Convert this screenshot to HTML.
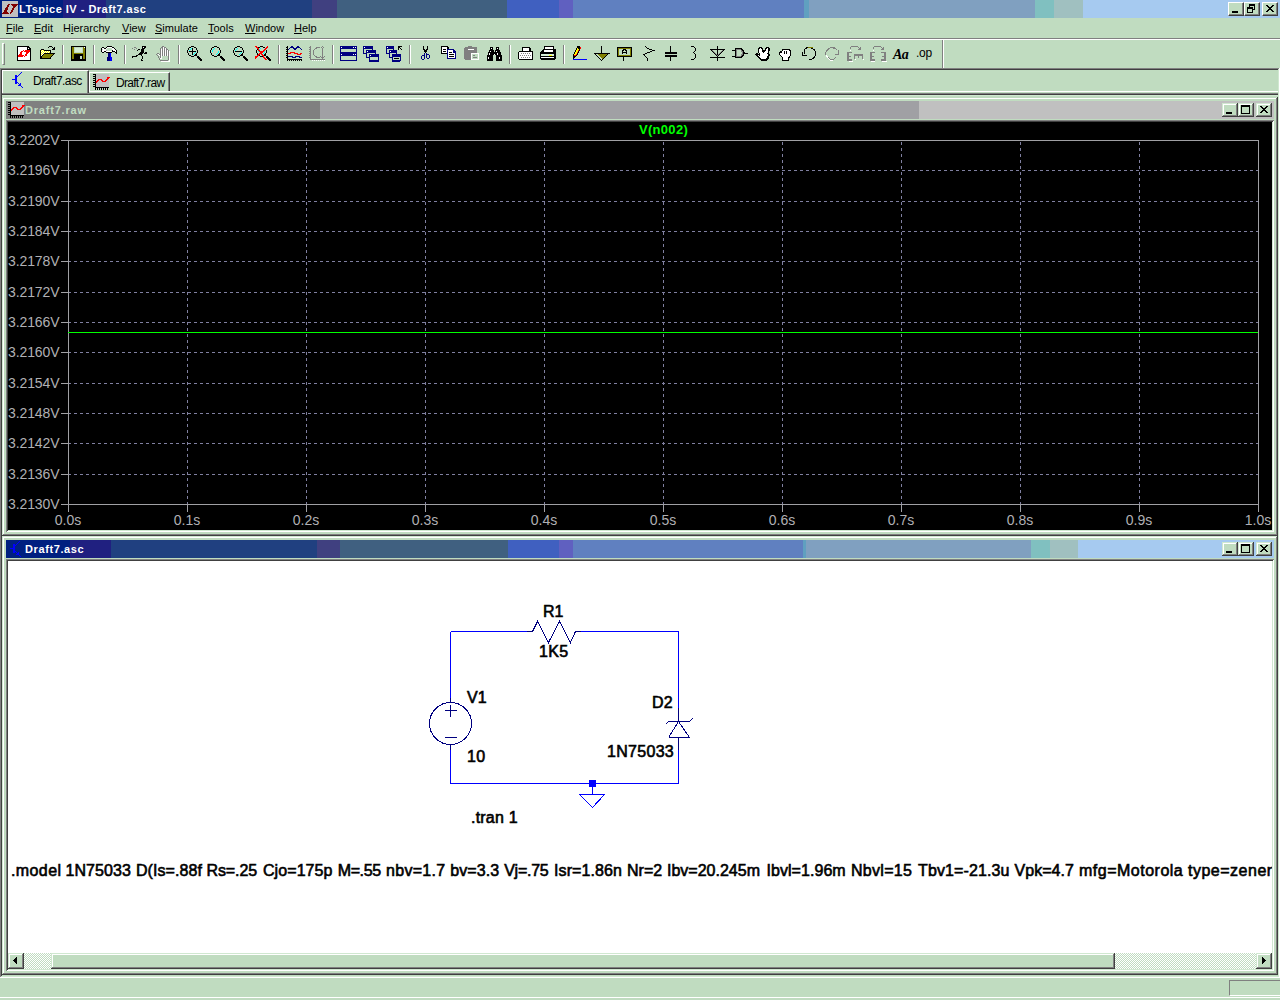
<!DOCTYPE html>
<html><head><meta charset="utf-8">
<style>
*{margin:0;padding:0;box-sizing:border-box}
html,body{width:1280px;height:1000px;overflow:hidden;background:#C0DCC0;font-family:"Liberation Sans",sans-serif}
.a{position:absolute}
.t{position:absolute;white-space:nowrap;line-height:1}
.tb span{position:absolute;top:0;height:18px}
.ttl{color:#fff;font-weight:bold;font-size:11px;letter-spacing:0.4px}
.btn{position:absolute;background:#C0DCC0;border-top:1px solid #fff;border-left:1px solid #fff;border-right:1px solid #404040;border-bottom:1px solid #404040;box-shadow:inset -1px -1px 0 #808080}
.menu span{position:absolute;top:22px;font-size:11px;color:#000}
.menu u{text-decoration:underline;text-decoration-thickness:1px;text-underline-offset:1px}
.sep{position:absolute;top:45px;width:2px;height:19px;border-left:1px solid #808080;border-right:1px solid #fff}
.ic{position:absolute;top:45px;width:16px;height:16px}
.ylab{position:absolute;left:8px;width:53px;font-size:14px;color:#B0B0B4;line-height:14px;letter-spacing:-0.1px}
.xlab{position:absolute;top:513px;font-size:14px;color:#B0B0B4;line-height:14px;width:60px;text-align:center}
.sch{position:absolute;font-size:16px;color:#000;line-height:16px;white-space:nowrap;-webkit-text-stroke:0.6px #000}
.fr{box-shadow:inset -1px -1px 0 #404040,inset 1px 1px 0 #D0E8D0,inset -2px -2px 0 #808080,inset 2px 2px 0 #fff}
.sk{box-shadow:inset 1px 1px 0 #808080,inset -1px -1px 0 #fff,inset 2px 2px 0 #404040,inset -2px -2px 0 #D0E8D0}
.rb{background:#C0DCC0;box-shadow:inset -1px -1px 0 #404040,inset 1px 1px 0 #D0E8D0,inset -2px -2px 0 #808080,inset 2px 2px 0 #fff}
.ctb span{position:absolute;top:0;height:18px}
</style></head><body>

<!-- main title bar -->
<div class="a tb" style="left:0;top:0;width:1280px;height:18px;background:#A6CAF0">
<span style="left:0;width:63px;background:#002080"></span>
<span style="left:63px;width:43px;background:#202080"></span>
<span style="left:106px;width:206px;background:#204080"></span>
<span style="left:312px;width:25px;background:#404080"></span>
<span style="left:337px;width:170px;background:#406080"></span>
<span style="left:507px;width:52px;background:#4060C0"></span>
<span style="left:559px;width:14px;background:#6060C0"></span>
<span style="left:573px;width:231px;background:#6080C0"></span>
<span style="left:804px;width:5px;background:#60A0C0"></span>
<span style="left:809px;width:226px;background:#80A0C0"></span>
<span style="left:1035px;width:19px;background:#80C0C0"></span>
<span style="left:1054px;width:29px;background:#A0C0C0"></span>
</div>
<div id="appicon" class="a" style="left:2px;top:1px;width:16px;height:16px;background:#C0C0C0"></div>
<div class="t ttl" style="left:19px;top:4px;letter-spacing:0.48px">LTspice IV - Draft7.asc</div>
<div class="btn" style="left:1228px;top:2px;width:16px;height:14px"></div>
<div class="btn" style="left:1244px;top:2px;width:16px;height:14px"></div>
<div class="btn" style="left:1262px;top:2px;width:16px;height:14px"></div>

<!-- menu -->
<div class="menu">
<span style="left:6px"><u>F</u>ile</span>
<span style="left:34px"><u>E</u>dit</span>
<span style="left:63px">H<u>i</u>erarchy</span>
<span style="left:122px"><u>V</u>iew</span>
<span style="left:155px"><u>S</u>imulate</span>
<span style="left:208px"><u>T</u>ools</span>
<span style="left:245px"><u>W</u>indow</span>
<span style="left:294px"><u>H</u>elp</span>
</div>
<div class="a" style="left:0;top:38px;width:1280px;height:1px;background:#808080"></div>
<div class="a" style="left:0;top:39px;width:1280px;height:1px;background:#fff"></div>

<!-- toolbar -->
<div class="a" style="left:2px;top:43px;width:3px;height:22px;border-left:1px solid #fff;border-top:1px solid #fff;border-right:1px solid #808080;border-bottom:1px solid #808080"></div>
<svg class="a" style="left:0;top:0" width="1280" height="70" shape-rendering="crispEdges">
<path d="M17 46H28L31 49V61H17Z" fill="#000"/>
<path d="M18 47H27V50H30V60H18Z" fill="#fff"/>
<rect x="28" y="48" width="1" height="1" fill="#fff"/>
<rect x="27" y="47" width="1" height="3" fill="#000"/>
<rect x="27" y="49" width="3" height="1" fill="#000"/>
<rect x="28" y="47" width="1" height="1" fill="#000"/>
<rect x="23" y="50" width="1" height="1" fill="#FF0000"/>
<rect x="25" y="50" width="5" height="1" fill="#FF0000"/>
<rect x="21" y="51" width="2" height="1" fill="#FF0000"/>
<rect x="24" y="51" width="6" height="1" fill="#FF0000"/>
<rect x="20" y="52" width="2" height="1" fill="#FF0000"/>
<rect x="26" y="52" width="3" height="1" fill="#FF0000"/>
<rect x="20" y="53" width="2" height="1" fill="#FF0000"/>
<rect x="26" y="53" width="2" height="1" fill="#FF0000"/>
<rect x="19" y="54" width="3" height="1" fill="#FF0000"/>
<rect x="25" y="54" width="2" height="1" fill="#FF0000"/>
<rect x="18" y="55" width="6" height="1" fill="#FF0000"/>
<rect x="25" y="55" width="2" height="1" fill="#FF0000"/>
<rect x="18" y="56" width="5" height="1" fill="#FF0000"/>
<rect x="24" y="56" width="1" height="1" fill="#FF0000"/>
<rect x="49" y="46" width="1" height="1" fill="#000"/>
<rect x="50" y="46" width="1" height="1" fill="#000"/>
<rect x="51" y="46" width="1" height="1" fill="#000"/>
<rect x="48" y="47" width="1" height="1" fill="#000"/>
<rect x="52" y="47" width="1" height="1" fill="#000"/>
<rect x="54" y="47" width="1" height="1" fill="#000"/>
<rect x="53" y="48" width="1" height="1" fill="#000"/>
<rect x="54" y="48" width="1" height="1" fill="#000"/>
<rect x="41" y="49" width="1" height="1" fill="#000"/>
<rect x="42" y="49" width="1" height="1" fill="#000"/>
<rect x="43" y="49" width="1" height="1" fill="#000"/>
<rect x="52" y="49" width="1" height="1" fill="#000"/>
<rect x="53" y="49" width="1" height="1" fill="#000"/>
<rect x="54" y="49" width="1" height="1" fill="#000"/>
<rect x="40" y="50" width="1" height="1" fill="#000"/>
<rect x="41" y="50" width="1" height="1" fill="#FFFF00"/>
<rect x="42" y="50" width="1" height="1" fill="#fff"/>
<rect x="43" y="50" width="1" height="1" fill="#FFFF00"/>
<rect x="44" y="50" width="1" height="1" fill="#000"/>
<rect x="45" y="50" width="1" height="1" fill="#000"/>
<rect x="46" y="50" width="1" height="1" fill="#000"/>
<rect x="47" y="50" width="1" height="1" fill="#000"/>
<rect x="48" y="50" width="1" height="1" fill="#000"/>
<rect x="49" y="50" width="1" height="1" fill="#000"/>
<rect x="50" y="50" width="1" height="1" fill="#000"/>
<rect x="40" y="51" width="1" height="1" fill="#000"/>
<rect x="41" y="51" width="1" height="1" fill="#fff"/>
<rect x="42" y="51" width="1" height="1" fill="#FFFF00"/>
<rect x="43" y="51" width="1" height="1" fill="#fff"/>
<rect x="44" y="51" width="1" height="1" fill="#FFFF00"/>
<rect x="45" y="51" width="1" height="1" fill="#fff"/>
<rect x="46" y="51" width="1" height="1" fill="#FFFF00"/>
<rect x="47" y="51" width="1" height="1" fill="#fff"/>
<rect x="48" y="51" width="1" height="1" fill="#FFFF00"/>
<rect x="49" y="51" width="1" height="1" fill="#fff"/>
<rect x="50" y="51" width="1" height="1" fill="#000"/>
<rect x="40" y="52" width="1" height="1" fill="#000"/>
<rect x="41" y="52" width="1" height="1" fill="#FFFF00"/>
<rect x="42" y="52" width="1" height="1" fill="#fff"/>
<rect x="43" y="52" width="1" height="1" fill="#FFFF00"/>
<rect x="44" y="52" width="1" height="1" fill="#fff"/>
<rect x="45" y="52" width="1" height="1" fill="#FFFF00"/>
<rect x="46" y="52" width="1" height="1" fill="#fff"/>
<rect x="47" y="52" width="1" height="1" fill="#FFFF00"/>
<rect x="48" y="52" width="1" height="1" fill="#fff"/>
<rect x="49" y="52" width="1" height="1" fill="#FFFF00"/>
<rect x="50" y="52" width="1" height="1" fill="#000"/>
<rect x="40" y="53" width="1" height="1" fill="#000"/>
<rect x="41" y="53" width="1" height="1" fill="#fff"/>
<rect x="42" y="53" width="1" height="1" fill="#FFFF00"/>
<rect x="43" y="53" width="1" height="1" fill="#fff"/>
<rect x="44" y="53" width="1" height="1" fill="#000"/>
<rect x="45" y="53" width="1" height="1" fill="#000"/>
<rect x="46" y="53" width="1" height="1" fill="#000"/>
<rect x="47" y="53" width="1" height="1" fill="#000"/>
<rect x="48" y="53" width="1" height="1" fill="#000"/>
<rect x="49" y="53" width="1" height="1" fill="#000"/>
<rect x="50" y="53" width="1" height="1" fill="#000"/>
<rect x="51" y="53" width="1" height="1" fill="#000"/>
<rect x="52" y="53" width="1" height="1" fill="#000"/>
<rect x="53" y="53" width="1" height="1" fill="#000"/>
<rect x="54" y="53" width="1" height="1" fill="#000"/>
<rect x="40" y="54" width="1" height="1" fill="#000"/>
<rect x="41" y="54" width="1" height="1" fill="#FFFF00"/>
<rect x="42" y="54" width="1" height="1" fill="#fff"/>
<rect x="43" y="54" width="1" height="1" fill="#000"/>
<rect x="44" y="54" width="1" height="1" fill="#808000"/>
<rect x="45" y="54" width="1" height="1" fill="#808000"/>
<rect x="46" y="54" width="1" height="1" fill="#808000"/>
<rect x="47" y="54" width="1" height="1" fill="#808000"/>
<rect x="48" y="54" width="1" height="1" fill="#808000"/>
<rect x="49" y="54" width="1" height="1" fill="#808000"/>
<rect x="50" y="54" width="1" height="1" fill="#808000"/>
<rect x="51" y="54" width="1" height="1" fill="#808000"/>
<rect x="52" y="54" width="1" height="1" fill="#808000"/>
<rect x="53" y="54" width="1" height="1" fill="#000"/>
<rect x="40" y="55" width="1" height="1" fill="#000"/>
<rect x="41" y="55" width="1" height="1" fill="#fff"/>
<rect x="42" y="55" width="1" height="1" fill="#000"/>
<rect x="43" y="55" width="1" height="1" fill="#808000"/>
<rect x="44" y="55" width="1" height="1" fill="#808000"/>
<rect x="45" y="55" width="1" height="1" fill="#808000"/>
<rect x="46" y="55" width="1" height="1" fill="#808000"/>
<rect x="47" y="55" width="1" height="1" fill="#808000"/>
<rect x="48" y="55" width="1" height="1" fill="#808000"/>
<rect x="49" y="55" width="1" height="1" fill="#808000"/>
<rect x="50" y="55" width="1" height="1" fill="#808000"/>
<rect x="51" y="55" width="1" height="1" fill="#808000"/>
<rect x="52" y="55" width="1" height="1" fill="#000"/>
<rect x="40" y="56" width="1" height="1" fill="#000"/>
<rect x="41" y="56" width="1" height="1" fill="#000"/>
<rect x="42" y="56" width="1" height="1" fill="#808000"/>
<rect x="43" y="56" width="1" height="1" fill="#808000"/>
<rect x="44" y="56" width="1" height="1" fill="#808000"/>
<rect x="45" y="56" width="1" height="1" fill="#808000"/>
<rect x="46" y="56" width="1" height="1" fill="#808000"/>
<rect x="47" y="56" width="1" height="1" fill="#808000"/>
<rect x="48" y="56" width="1" height="1" fill="#808000"/>
<rect x="49" y="56" width="1" height="1" fill="#808000"/>
<rect x="50" y="56" width="1" height="1" fill="#808000"/>
<rect x="51" y="56" width="1" height="1" fill="#000"/>
<rect x="40" y="57" width="1" height="1" fill="#000"/>
<rect x="41" y="57" width="1" height="1" fill="#000"/>
<rect x="42" y="57" width="1" height="1" fill="#808000"/>
<rect x="43" y="57" width="1" height="1" fill="#808000"/>
<rect x="44" y="57" width="1" height="1" fill="#808000"/>
<rect x="45" y="57" width="1" height="1" fill="#808000"/>
<rect x="46" y="57" width="1" height="1" fill="#808000"/>
<rect x="47" y="57" width="1" height="1" fill="#808000"/>
<rect x="48" y="57" width="1" height="1" fill="#808000"/>
<rect x="49" y="57" width="1" height="1" fill="#808000"/>
<rect x="50" y="57" width="1" height="1" fill="#000"/>
<rect x="40" y="58" width="1" height="1" fill="#000"/>
<rect x="41" y="58" width="1" height="1" fill="#000"/>
<rect x="42" y="58" width="1" height="1" fill="#000"/>
<rect x="43" y="58" width="1" height="1" fill="#000"/>
<rect x="44" y="58" width="1" height="1" fill="#000"/>
<rect x="45" y="58" width="1" height="1" fill="#000"/>
<rect x="46" y="58" width="1" height="1" fill="#000"/>
<rect x="47" y="58" width="1" height="1" fill="#000"/>
<rect x="48" y="58" width="1" height="1" fill="#000"/>
<rect x="49" y="58" width="1" height="1" fill="#000"/>
<rect x="50" y="58" width="1" height="1" fill="#000"/>
<rect x="71" y="46" width="15" height="15" fill="#000"/>
<rect x="72" y="47" width="2" height="12" fill="#808000"/>
<rect x="83" y="47" width="2" height="12" fill="#808000"/>
<rect x="74" y="47" width="9" height="6" fill="#C0DCC0"/>
<rect x="75" y="48" width="7" height="4" fill="#D8F0D8"/>
<rect x="74" y="53" width="9" height="1" fill="#808000"/>
<rect x="80" y="56" width="2" height="3" fill="#C0DCC0"/>
<rect x="84" y="47" width="1" height="1" fill="#fff"/>
<rect x="107" y="46" width="1" height="1" fill="#000"/>
<rect x="108" y="46" width="1" height="1" fill="#000"/>
<rect x="109" y="46" width="1" height="1" fill="#000"/>
<rect x="110" y="46" width="1" height="1" fill="#000"/>
<rect x="111" y="46" width="1" height="1" fill="#000"/>
<rect x="102" y="47" width="1" height="1" fill="#000"/>
<rect x="103" y="47" width="1" height="1" fill="#000"/>
<rect x="106" y="47" width="1" height="1" fill="#000"/>
<rect x="107" y="47" width="1" height="1" fill="#fff"/>
<rect x="108" y="47" width="1" height="1" fill="#fff"/>
<rect x="109" y="47" width="1" height="1" fill="#fff"/>
<rect x="110" y="47" width="1" height="1" fill="#fff"/>
<rect x="111" y="47" width="1" height="1" fill="#fff"/>
<rect x="112" y="47" width="1" height="1" fill="#000"/>
<rect x="113" y="47" width="1" height="1" fill="#000"/>
<rect x="101" y="48" width="1" height="1" fill="#000"/>
<rect x="102" y="48" width="1" height="1" fill="#fff"/>
<rect x="103" y="48" width="1" height="1" fill="#fff"/>
<rect x="104" y="48" width="1" height="1" fill="#000"/>
<rect x="105" y="48" width="1" height="1" fill="#000"/>
<rect x="106" y="48" width="1" height="1" fill="#fff"/>
<rect x="107" y="48" width="1" height="1" fill="#C0DCC0"/>
<rect x="108" y="48" width="1" height="1" fill="#C0DCC0"/>
<rect x="109" y="48" width="1" height="1" fill="#C0DCC0"/>
<rect x="110" y="48" width="1" height="1" fill="#C0DCC0"/>
<rect x="111" y="48" width="1" height="1" fill="#C0DCC0"/>
<rect x="112" y="48" width="1" height="1" fill="#fff"/>
<rect x="113" y="48" width="1" height="1" fill="#fff"/>
<rect x="114" y="48" width="1" height="1" fill="#000"/>
<rect x="101" y="49" width="1" height="1" fill="#000"/>
<rect x="102" y="49" width="1" height="1" fill="#C0DCC0"/>
<rect x="103" y="49" width="1" height="1" fill="#fff"/>
<rect x="104" y="49" width="1" height="1" fill="#fff"/>
<rect x="105" y="49" width="1" height="1" fill="#fff"/>
<rect x="106" y="49" width="1" height="1" fill="#C0DCC0"/>
<rect x="107" y="49" width="1" height="1" fill="#C0DCC0"/>
<rect x="108" y="49" width="1" height="1" fill="#C0DCC0"/>
<rect x="109" y="49" width="1" height="1" fill="#C0DCC0"/>
<rect x="110" y="49" width="1" height="1" fill="#C0DCC0"/>
<rect x="111" y="49" width="1" height="1" fill="#C0DCC0"/>
<rect x="112" y="49" width="1" height="1" fill="#fff"/>
<rect x="113" y="49" width="1" height="1" fill="#fff"/>
<rect x="114" y="49" width="1" height="1" fill="#fff"/>
<rect x="115" y="49" width="1" height="1" fill="#000"/>
<rect x="101" y="50" width="1" height="1" fill="#000"/>
<rect x="102" y="50" width="1" height="1" fill="#fff"/>
<rect x="103" y="50" width="1" height="1" fill="#fff"/>
<rect x="104" y="50" width="1" height="1" fill="#fff"/>
<rect x="105" y="50" width="1" height="1" fill="#fff"/>
<rect x="106" y="50" width="1" height="1" fill="#A0A0A0"/>
<rect x="107" y="50" width="1" height="1" fill="#C0DCC0"/>
<rect x="108" y="50" width="1" height="1" fill="#C0DCC0"/>
<rect x="109" y="50" width="1" height="1" fill="#C0DCC0"/>
<rect x="110" y="50" width="1" height="1" fill="#C0DCC0"/>
<rect x="111" y="50" width="1" height="1" fill="#C0DCC0"/>
<rect x="112" y="50" width="1" height="1" fill="#000"/>
<rect x="113" y="50" width="1" height="1" fill="#fff"/>
<rect x="114" y="50" width="1" height="1" fill="#fff"/>
<rect x="115" y="50" width="1" height="1" fill="#fff"/>
<rect x="116" y="50" width="1" height="1" fill="#000"/>
<rect x="101" y="51" width="1" height="1" fill="#000"/>
<rect x="102" y="51" width="1" height="1" fill="#fff"/>
<rect x="103" y="51" width="1" height="1" fill="#fff"/>
<rect x="104" y="51" width="1" height="1" fill="#000"/>
<rect x="105" y="51" width="1" height="1" fill="#000"/>
<rect x="106" y="51" width="1" height="1" fill="#fff"/>
<rect x="107" y="51" width="1" height="1" fill="#fff"/>
<rect x="108" y="51" width="1" height="1" fill="#fff"/>
<rect x="109" y="51" width="1" height="1" fill="#fff"/>
<rect x="110" y="51" width="1" height="1" fill="#fff"/>
<rect x="111" y="51" width="1" height="1" fill="#fff"/>
<rect x="112" y="51" width="1" height="1" fill="#000"/>
<rect x="113" y="51" width="1" height="1" fill="#000"/>
<rect x="114" y="51" width="1" height="1" fill="#000"/>
<rect x="115" y="51" width="1" height="1" fill="#fff"/>
<rect x="116" y="51" width="1" height="1" fill="#000"/>
<rect x="102" y="52" width="1" height="1" fill="#000"/>
<rect x="103" y="52" width="1" height="1" fill="#000"/>
<rect x="106" y="52" width="1" height="1" fill="#000"/>
<rect x="107" y="52" width="1" height="1" fill="#000"/>
<rect x="108" y="52" width="1" height="1" fill="#000"/>
<rect x="109" y="52" width="1" height="1" fill="#000"/>
<rect x="110" y="52" width="1" height="1" fill="#000"/>
<rect x="111" y="52" width="1" height="1" fill="#000"/>
<rect x="115" y="52" width="1" height="1" fill="#000"/>
<rect x="116" y="52" width="1" height="1" fill="#000"/>
<rect x="116" y="53" width="1" height="1" fill="#000"/>
<rect x="108" y="53" width="2" height="4" fill="#000080"/>
<rect x="110" y="53" width="1" height="4" fill="#0000FF"/>
<rect x="107" y="57" width="3" height="4" fill="#000080"/>
<rect x="110" y="57" width="2" height="4" fill="#0000FF"/>
<rect x="142" y="46" width="1" height="1" fill="#000"/>
<rect x="143" y="46" width="1" height="1" fill="#000"/>
<rect x="144" y="46" width="1" height="1" fill="#000"/>
<rect x="145" y="46" width="1" height="1" fill="#000"/>
<rect x="134" y="47" width="1" height="1" fill="#808080"/>
<rect x="135" y="47" width="1" height="1" fill="#808080"/>
<rect x="142" y="47" width="1" height="1" fill="#000"/>
<rect x="143" y="47" width="1" height="1" fill="#fff"/>
<rect x="144" y="47" width="1" height="1" fill="#000"/>
<rect x="145" y="47" width="1" height="1" fill="#000"/>
<rect x="132" y="48" width="1" height="1" fill="#808080"/>
<rect x="136" y="48" width="1" height="1" fill="#808080"/>
<rect x="142" y="48" width="1" height="1" fill="#000"/>
<rect x="143" y="48" width="1" height="1" fill="#000"/>
<rect x="144" y="48" width="1" height="1" fill="#000"/>
<rect x="134" y="49" width="1" height="1" fill="#808080"/>
<rect x="138" y="49" width="1" height="1" fill="#000"/>
<rect x="139" y="49" width="1" height="1" fill="#000"/>
<rect x="141" y="49" width="1" height="1" fill="#000"/>
<rect x="142" y="49" width="1" height="1" fill="#000"/>
<rect x="143" y="49" width="1" height="1" fill="#000"/>
<rect x="137" y="50" width="1" height="1" fill="#000"/>
<rect x="141" y="50" width="1" height="1" fill="#000"/>
<rect x="142" y="50" width="1" height="1" fill="#000"/>
<rect x="143" y="50" width="1" height="1" fill="#000"/>
<rect x="141" y="51" width="1" height="1" fill="#000"/>
<rect x="142" y="51" width="1" height="1" fill="#000"/>
<rect x="143" y="51" width="1" height="1" fill="#000"/>
<rect x="140" y="52" width="1" height="1" fill="#000"/>
<rect x="141" y="52" width="1" height="1" fill="#000"/>
<rect x="142" y="52" width="1" height="1" fill="#000"/>
<rect x="143" y="52" width="1" height="1" fill="#000"/>
<rect x="145" y="52" width="1" height="1" fill="#000"/>
<rect x="146" y="52" width="1" height="1" fill="#000"/>
<rect x="139" y="53" width="1" height="1" fill="#000"/>
<rect x="140" y="53" width="1" height="1" fill="#000"/>
<rect x="141" y="53" width="1" height="1" fill="#000"/>
<rect x="142" y="53" width="1" height="1" fill="#000"/>
<rect x="144" y="53" width="1" height="1" fill="#000"/>
<rect x="145" y="53" width="1" height="1" fill="#000"/>
<rect x="146" y="53" width="1" height="1" fill="#000"/>
<rect x="138" y="54" width="1" height="1" fill="#000"/>
<rect x="139" y="54" width="1" height="1" fill="#000"/>
<rect x="140" y="54" width="1" height="1" fill="#000"/>
<rect x="141" y="54" width="1" height="1" fill="#000"/>
<rect x="136" y="55" width="1" height="1" fill="#000"/>
<rect x="137" y="55" width="1" height="1" fill="#000"/>
<rect x="141" y="55" width="1" height="1" fill="#000"/>
<rect x="132" y="56" width="1" height="1" fill="#000"/>
<rect x="133" y="56" width="1" height="1" fill="#000"/>
<rect x="134" y="56" width="1" height="1" fill="#000"/>
<rect x="135" y="56" width="1" height="1" fill="#000"/>
<rect x="136" y="56" width="1" height="1" fill="#000"/>
<rect x="142" y="56" width="1" height="1" fill="#000"/>
<rect x="132" y="57" width="1" height="1" fill="#000"/>
<rect x="142" y="57" width="1" height="1" fill="#000"/>
<rect x="142" y="58" width="1" height="1" fill="#000"/>
<rect x="141" y="59" width="1" height="1" fill="#000"/>
<rect x="141" y="60" width="1" height="1" fill="#000"/>
<rect x="142" y="60" width="1" height="1" fill="#000"/>
<rect x="160" y="48" width="1" height="10" fill="#808080"/>
<rect x="162" y="46" width="1" height="10" fill="#808080"/>
<rect x="164" y="47" width="1" height="9" fill="#808080"/>
<rect x="166" y="48" width="1" height="8" fill="#808080"/>
<rect x="168" y="50" width="1" height="10" fill="#808080"/>
<rect x="163" y="46" width="1" height="1" fill="#808080"/>
<rect x="161" y="47" width="1" height="1" fill="#808080"/>
<rect x="165" y="47" width="1" height="1" fill="#808080"/>
<rect x="167" y="49" width="1" height="1" fill="#808080"/>
<rect x="161" y="49" width="1" height="10" fill="#fff"/>
<rect x="163" y="47" width="1" height="9" fill="#fff"/>
<rect x="165" y="48" width="1" height="8" fill="#fff"/>
<rect x="167" y="50" width="1" height="6" fill="#fff"/>
<rect x="169" y="51" width="1" height="10" fill="#fff"/>
<rect x="157" y="53" width="2" height="1" fill="#808080"/>
<rect x="156" y="54" width="1" height="1" fill="#808080"/>
<rect x="159" y="54" width="1" height="1" fill="#808080"/>
<rect x="157" y="55" width="1" height="1" fill="#808080"/>
<rect x="158" y="56" width="1" height="2" fill="#808080"/>
<rect x="159" y="58" width="1" height="2" fill="#808080"/>
<rect x="160" y="60" width="8" height="1" fill="#808080"/>
<rect x="168" y="59" width="1" height="1" fill="#808080"/>
<rect x="158" y="54" width="1" height="1" fill="#fff"/>
<rect x="159" y="55" width="1" height="1" fill="#fff"/>
<rect x="160" y="58" width="1" height="1" fill="#fff"/>
<rect x="161" y="61" width="9" height="1" fill="#fff"/>
<rect x="191" y="46" width="1" height="1" fill="#000"/>
<rect x="192" y="46" width="1" height="1" fill="#000"/>
<rect x="193" y="46" width="1" height="1" fill="#000"/>
<rect x="189" y="47" width="1" height="1" fill="#000"/>
<rect x="190" y="47" width="1" height="1" fill="#000"/>
<rect x="194" y="47" width="1" height="1" fill="#000"/>
<rect x="195" y="47" width="1" height="1" fill="#000"/>
<rect x="188" y="48" width="1" height="1" fill="#000"/>
<rect x="191" y="48" width="1" height="1" fill="#00FFFF"/>
<rect x="196" y="48" width="1" height="1" fill="#000"/>
<rect x="188" y="49" width="1" height="1" fill="#000"/>
<rect x="190" y="49" width="1" height="1" fill="#00FFFF"/>
<rect x="196" y="49" width="1" height="1" fill="#000"/>
<rect x="187" y="50" width="1" height="1" fill="#000"/>
<rect x="189" y="50" width="1" height="1" fill="#00FFFF"/>
<rect x="197" y="50" width="1" height="1" fill="#000"/>
<rect x="187" y="51" width="1" height="1" fill="#000"/>
<rect x="189" y="51" width="1" height="1" fill="#00FFFF"/>
<rect x="195" y="51" width="1" height="1" fill="#00FFFF"/>
<rect x="197" y="51" width="1" height="1" fill="#000"/>
<rect x="187" y="52" width="1" height="1" fill="#000"/>
<rect x="195" y="52" width="1" height="1" fill="#00FFFF"/>
<rect x="197" y="52" width="1" height="1" fill="#000"/>
<rect x="188" y="53" width="1" height="1" fill="#000"/>
<rect x="194" y="53" width="1" height="1" fill="#00FFFF"/>
<rect x="196" y="53" width="1" height="1" fill="#000"/>
<rect x="188" y="54" width="1" height="1" fill="#000"/>
<rect x="193" y="54" width="1" height="1" fill="#00FFFF"/>
<rect x="195" y="54" width="1" height="1" fill="#000"/>
<rect x="196" y="54" width="1" height="1" fill="#000"/>
<rect x="189" y="55" width="1" height="1" fill="#000"/>
<rect x="190" y="55" width="1" height="1" fill="#000"/>
<rect x="194" y="55" width="1" height="1" fill="#000"/>
<rect x="195" y="55" width="1" height="1" fill="#000"/>
<rect x="196" y="55" width="1" height="1" fill="#000"/>
<rect x="191" y="56" width="1" height="1" fill="#000"/>
<rect x="192" y="56" width="1" height="1" fill="#000"/>
<rect x="193" y="56" width="1" height="1" fill="#000"/>
<rect x="197" y="56" width="1" height="1" fill="#000"/>
<rect x="197" y="57" width="1" height="1" fill="#000"/>
<rect x="198" y="57" width="1" height="1" fill="#000"/>
<rect x="198" y="58" width="1" height="1" fill="#000"/>
<rect x="199" y="58" width="1" height="1" fill="#000"/>
<rect x="199" y="59" width="1" height="1" fill="#000"/>
<rect x="200" y="59" width="1" height="1" fill="#000"/>
<rect x="200" y="60" width="1" height="1" fill="#000"/>
<rect x="201" y="60" width="1" height="1" fill="#000"/>
<rect x="197" y="56" width="2" height="1" fill="#000"/>
<rect x="197" y="57" width="3" height="1" fill="#000"/>
<rect x="198" y="58" width="3" height="1" fill="#000"/>
<rect x="199" y="59" width="3" height="1" fill="#000"/>
<rect x="200" y="60" width="2" height="1" fill="#000"/>
<rect x="189" y="51" width="7" height="1" fill="#000"/>
<rect x="192" y="48" width="1" height="7" fill="#000"/>
<rect x="214" y="46" width="1" height="1" fill="#000"/>
<rect x="215" y="46" width="1" height="1" fill="#000"/>
<rect x="216" y="46" width="1" height="1" fill="#000"/>
<rect x="212" y="47" width="1" height="1" fill="#000"/>
<rect x="213" y="47" width="1" height="1" fill="#000"/>
<rect x="217" y="47" width="1" height="1" fill="#000"/>
<rect x="218" y="47" width="1" height="1" fill="#000"/>
<rect x="211" y="48" width="1" height="1" fill="#000"/>
<rect x="214" y="48" width="1" height="1" fill="#00FFFF"/>
<rect x="219" y="48" width="1" height="1" fill="#000"/>
<rect x="211" y="49" width="1" height="1" fill="#000"/>
<rect x="213" y="49" width="1" height="1" fill="#00FFFF"/>
<rect x="219" y="49" width="1" height="1" fill="#000"/>
<rect x="210" y="50" width="1" height="1" fill="#000"/>
<rect x="212" y="50" width="1" height="1" fill="#00FFFF"/>
<rect x="220" y="50" width="1" height="1" fill="#000"/>
<rect x="210" y="51" width="1" height="1" fill="#000"/>
<rect x="212" y="51" width="1" height="1" fill="#00FFFF"/>
<rect x="218" y="51" width="1" height="1" fill="#00FFFF"/>
<rect x="220" y="51" width="1" height="1" fill="#000"/>
<rect x="210" y="52" width="1" height="1" fill="#000"/>
<rect x="218" y="52" width="1" height="1" fill="#00FFFF"/>
<rect x="220" y="52" width="1" height="1" fill="#000"/>
<rect x="211" y="53" width="1" height="1" fill="#000"/>
<rect x="217" y="53" width="1" height="1" fill="#00FFFF"/>
<rect x="219" y="53" width="1" height="1" fill="#000"/>
<rect x="211" y="54" width="1" height="1" fill="#000"/>
<rect x="216" y="54" width="1" height="1" fill="#00FFFF"/>
<rect x="218" y="54" width="1" height="1" fill="#000"/>
<rect x="219" y="54" width="1" height="1" fill="#000"/>
<rect x="212" y="55" width="1" height="1" fill="#000"/>
<rect x="213" y="55" width="1" height="1" fill="#000"/>
<rect x="217" y="55" width="1" height="1" fill="#000"/>
<rect x="218" y="55" width="1" height="1" fill="#000"/>
<rect x="219" y="55" width="1" height="1" fill="#000"/>
<rect x="214" y="56" width="1" height="1" fill="#000"/>
<rect x="215" y="56" width="1" height="1" fill="#000"/>
<rect x="216" y="56" width="1" height="1" fill="#000"/>
<rect x="220" y="56" width="1" height="1" fill="#000"/>
<rect x="220" y="57" width="1" height="1" fill="#000"/>
<rect x="221" y="57" width="1" height="1" fill="#000"/>
<rect x="221" y="58" width="1" height="1" fill="#000"/>
<rect x="222" y="58" width="1" height="1" fill="#000"/>
<rect x="222" y="59" width="1" height="1" fill="#000"/>
<rect x="223" y="59" width="1" height="1" fill="#000"/>
<rect x="223" y="60" width="1" height="1" fill="#000"/>
<rect x="224" y="60" width="1" height="1" fill="#000"/>
<rect x="220" y="56" width="2" height="1" fill="#000"/>
<rect x="220" y="57" width="3" height="1" fill="#000"/>
<rect x="221" y="58" width="3" height="1" fill="#000"/>
<rect x="222" y="59" width="3" height="1" fill="#000"/>
<rect x="223" y="60" width="2" height="1" fill="#000"/>
<rect x="237" y="46" width="1" height="1" fill="#000"/>
<rect x="238" y="46" width="1" height="1" fill="#000"/>
<rect x="239" y="46" width="1" height="1" fill="#000"/>
<rect x="235" y="47" width="1" height="1" fill="#000"/>
<rect x="236" y="47" width="1" height="1" fill="#000"/>
<rect x="240" y="47" width="1" height="1" fill="#000"/>
<rect x="241" y="47" width="1" height="1" fill="#000"/>
<rect x="234" y="48" width="1" height="1" fill="#000"/>
<rect x="237" y="48" width="1" height="1" fill="#00FFFF"/>
<rect x="242" y="48" width="1" height="1" fill="#000"/>
<rect x="234" y="49" width="1" height="1" fill="#000"/>
<rect x="236" y="49" width="1" height="1" fill="#00FFFF"/>
<rect x="242" y="49" width="1" height="1" fill="#000"/>
<rect x="233" y="50" width="1" height="1" fill="#000"/>
<rect x="235" y="50" width="1" height="1" fill="#00FFFF"/>
<rect x="243" y="50" width="1" height="1" fill="#000"/>
<rect x="233" y="51" width="1" height="1" fill="#000"/>
<rect x="235" y="51" width="1" height="1" fill="#00FFFF"/>
<rect x="241" y="51" width="1" height="1" fill="#00FFFF"/>
<rect x="243" y="51" width="1" height="1" fill="#000"/>
<rect x="233" y="52" width="1" height="1" fill="#000"/>
<rect x="241" y="52" width="1" height="1" fill="#00FFFF"/>
<rect x="243" y="52" width="1" height="1" fill="#000"/>
<rect x="234" y="53" width="1" height="1" fill="#000"/>
<rect x="240" y="53" width="1" height="1" fill="#00FFFF"/>
<rect x="242" y="53" width="1" height="1" fill="#000"/>
<rect x="234" y="54" width="1" height="1" fill="#000"/>
<rect x="239" y="54" width="1" height="1" fill="#00FFFF"/>
<rect x="241" y="54" width="1" height="1" fill="#000"/>
<rect x="242" y="54" width="1" height="1" fill="#000"/>
<rect x="235" y="55" width="1" height="1" fill="#000"/>
<rect x="236" y="55" width="1" height="1" fill="#000"/>
<rect x="240" y="55" width="1" height="1" fill="#000"/>
<rect x="241" y="55" width="1" height="1" fill="#000"/>
<rect x="242" y="55" width="1" height="1" fill="#000"/>
<rect x="237" y="56" width="1" height="1" fill="#000"/>
<rect x="238" y="56" width="1" height="1" fill="#000"/>
<rect x="239" y="56" width="1" height="1" fill="#000"/>
<rect x="243" y="56" width="1" height="1" fill="#000"/>
<rect x="243" y="57" width="1" height="1" fill="#000"/>
<rect x="244" y="57" width="1" height="1" fill="#000"/>
<rect x="244" y="58" width="1" height="1" fill="#000"/>
<rect x="245" y="58" width="1" height="1" fill="#000"/>
<rect x="245" y="59" width="1" height="1" fill="#000"/>
<rect x="246" y="59" width="1" height="1" fill="#000"/>
<rect x="246" y="60" width="1" height="1" fill="#000"/>
<rect x="247" y="60" width="1" height="1" fill="#000"/>
<rect x="243" y="56" width="2" height="1" fill="#000"/>
<rect x="243" y="57" width="3" height="1" fill="#000"/>
<rect x="244" y="58" width="3" height="1" fill="#000"/>
<rect x="245" y="59" width="3" height="1" fill="#000"/>
<rect x="246" y="60" width="2" height="1" fill="#000"/>
<rect x="235" y="51" width="7" height="1" fill="#000"/>
<rect x="260" y="46" width="1" height="1" fill="#000"/>
<rect x="261" y="46" width="1" height="1" fill="#000"/>
<rect x="262" y="46" width="1" height="1" fill="#000"/>
<rect x="258" y="47" width="1" height="1" fill="#000"/>
<rect x="259" y="47" width="1" height="1" fill="#000"/>
<rect x="263" y="47" width="1" height="1" fill="#000"/>
<rect x="264" y="47" width="1" height="1" fill="#000"/>
<rect x="257" y="48" width="1" height="1" fill="#000"/>
<rect x="260" y="48" width="1" height="1" fill="#00FFFF"/>
<rect x="265" y="48" width="1" height="1" fill="#000"/>
<rect x="257" y="49" width="1" height="1" fill="#000"/>
<rect x="259" y="49" width="1" height="1" fill="#00FFFF"/>
<rect x="265" y="49" width="1" height="1" fill="#000"/>
<rect x="256" y="50" width="1" height="1" fill="#000"/>
<rect x="258" y="50" width="1" height="1" fill="#00FFFF"/>
<rect x="266" y="50" width="1" height="1" fill="#000"/>
<rect x="256" y="51" width="1" height="1" fill="#000"/>
<rect x="258" y="51" width="1" height="1" fill="#00FFFF"/>
<rect x="264" y="51" width="1" height="1" fill="#00FFFF"/>
<rect x="266" y="51" width="1" height="1" fill="#000"/>
<rect x="256" y="52" width="1" height="1" fill="#000"/>
<rect x="264" y="52" width="1" height="1" fill="#00FFFF"/>
<rect x="266" y="52" width="1" height="1" fill="#000"/>
<rect x="257" y="53" width="1" height="1" fill="#000"/>
<rect x="263" y="53" width="1" height="1" fill="#00FFFF"/>
<rect x="265" y="53" width="1" height="1" fill="#000"/>
<rect x="257" y="54" width="1" height="1" fill="#000"/>
<rect x="262" y="54" width="1" height="1" fill="#00FFFF"/>
<rect x="264" y="54" width="1" height="1" fill="#000"/>
<rect x="265" y="54" width="1" height="1" fill="#000"/>
<rect x="258" y="55" width="1" height="1" fill="#000"/>
<rect x="259" y="55" width="1" height="1" fill="#000"/>
<rect x="263" y="55" width="1" height="1" fill="#000"/>
<rect x="264" y="55" width="1" height="1" fill="#000"/>
<rect x="265" y="55" width="1" height="1" fill="#000"/>
<rect x="260" y="56" width="1" height="1" fill="#000"/>
<rect x="261" y="56" width="1" height="1" fill="#000"/>
<rect x="262" y="56" width="1" height="1" fill="#000"/>
<rect x="266" y="56" width="1" height="1" fill="#000"/>
<rect x="266" y="57" width="1" height="1" fill="#000"/>
<rect x="267" y="57" width="1" height="1" fill="#000"/>
<rect x="267" y="58" width="1" height="1" fill="#000"/>
<rect x="268" y="58" width="1" height="1" fill="#000"/>
<rect x="268" y="59" width="1" height="1" fill="#000"/>
<rect x="269" y="59" width="1" height="1" fill="#000"/>
<rect x="269" y="60" width="1" height="1" fill="#000"/>
<rect x="270" y="60" width="1" height="1" fill="#000"/>
<rect x="266" y="56" width="2" height="1" fill="#000"/>
<rect x="266" y="57" width="3" height="1" fill="#000"/>
<rect x="267" y="58" width="3" height="1" fill="#000"/>
<rect x="268" y="59" width="3" height="1" fill="#000"/>
<rect x="269" y="60" width="2" height="1" fill="#000"/>
<path d="M256 46L266 60M268 47L255 58" stroke="#FF0000" fill="none" stroke-width="1.6"/>
<rect x="287" y="46" width="1" height="15" fill="#000"/>
<rect x="286" y="47" width="1" height="1" fill="#000"/>
<rect x="286" y="49" width="1" height="1" fill="#000"/>
<rect x="286" y="51" width="1" height="1" fill="#000"/>
<rect x="286" y="53" width="1" height="1" fill="#000"/>
<rect x="286" y="55" width="1" height="1" fill="#000"/>
<rect x="286" y="57" width="1" height="1" fill="#000"/>
<rect x="287" y="59" width="15" height="1" fill="#000"/>
<rect x="289" y="60" width="1" height="1" fill="#000"/>
<rect x="291" y="60" width="1" height="1" fill="#000"/>
<rect x="293" y="60" width="1" height="1" fill="#000"/>
<rect x="295" y="60" width="1" height="1" fill="#000"/>
<rect x="297" y="60" width="1" height="1" fill="#000"/>
<rect x="299" y="60" width="1" height="1" fill="#000"/>
<rect x="301" y="60" width="1" height="1" fill="#000"/>
<path d="M288 50L292 46.5L295 49.5L298 46.5L302 50" stroke="#000080" fill="none" stroke-width="1"/>
<path d="M288 53.5H290L291 52.5H294L295 53.5H297L298 54.5H300L301 53.5H302" stroke="#FF0000" fill="none" stroke-width="1"/>
<path d="M288 56.5H292L293 57.5H295L296 56.5H299L300 57.5H302" stroke="#000080" fill="none" stroke-width="1"/>
<rect x="310" y="46" width="1" height="14" fill="#808080"/>
<rect x="310" y="59" width="15" height="1" fill="#808080"/>
<rect x="309" y="47" width="1" height="1" fill="#808080"/>
<rect x="309" y="49" width="1" height="1" fill="#808080"/>
<rect x="309" y="51" width="1" height="1" fill="#808080"/>
<rect x="309" y="53" width="1" height="1" fill="#808080"/>
<rect x="309" y="55" width="1" height="1" fill="#808080"/>
<rect x="309" y="57" width="1" height="1" fill="#808080"/>
<rect x="312" y="60" width="1" height="1" fill="#fff"/>
<rect x="314" y="60" width="1" height="1" fill="#fff"/>
<rect x="316" y="60" width="1" height="1" fill="#fff"/>
<rect x="318" y="60" width="1" height="1" fill="#fff"/>
<rect x="320" y="60" width="1" height="1" fill="#fff"/>
<rect x="322" y="60" width="1" height="1" fill="#fff"/>
<rect x="324" y="60" width="1" height="1" fill="#fff"/>
<path d="M322.5 47.5V57.5M320.5 48.5L322.5 46.5L324.5 48.5M320.5 56.5L322.5 58.5L324.5 56.5" stroke="#808080" fill="none" stroke-width="1"/>
<path d="M319.5 47.5Q313.5 47.5 313.5 52.5Q313.5 57.5 319.5 57.5" stroke="#808080" fill="none" stroke-width="1"/>
<rect x="340" y="46" width="17" height="15" fill="#000080"/>
<rect x="341" y="49" width="15" height="3" fill="#C0DCC0"/>
<rect x="341" y="56" width="15" height="4" fill="#C0DCC0"/>
<rect x="341" y="52" width="15" height="1" fill="#000080"/>
<rect x="341" y="47" width="1" height="1" fill="#fff"/>
<rect x="353" y="47" width="1" height="1" fill="#fff"/>
<rect x="355" y="47" width="1" height="1" fill="#fff"/>
<rect x="341" y="54" width="1" height="1" fill="#fff"/>
<rect x="353" y="54" width="1" height="1" fill="#fff"/>
<rect x="355" y="54" width="1" height="1" fill="#fff"/>
<rect x="363" y="46" width="10" height="8" fill="#000080"/>
<rect x="364" y="49" width="8" height="4" fill="#C0DCC0"/>
<rect x="364" y="47" width="1" height="1" fill="#fff"/>
<rect x="366" y="50" width="10" height="8" fill="#000080"/>
<rect x="367" y="53" width="8" height="4" fill="#C0DCC0"/>
<rect x="367" y="51" width="1" height="1" fill="#fff"/>
<rect x="369" y="54" width="10" height="8" fill="#000080"/>
<rect x="370" y="57" width="8" height="4" fill="#C0DCC0"/>
<rect x="370" y="55" width="1" height="1" fill="#fff"/>
<rect x="369" y="58" width="9" height="3" fill="#C0DCC0"/>
<rect x="369" y="54" width="10" height="7" fill="#000080"/>
<rect x="370" y="57" width="8" height="3" fill="#C0DCC0"/>
<rect x="370" y="55" width="1" height="1" fill="#fff"/>
<rect x="386" y="46" width="8" height="8" fill="#000080"/>
<rect x="387" y="49" width="6" height="4" fill="#C0DCC0"/>
<rect x="387" y="47" width="1" height="1" fill="#fff"/>
<rect x="389" y="50" width="8" height="8" fill="#000080"/>
<rect x="390" y="53" width="6" height="4" fill="#C0DCC0"/>
<rect x="390" y="51" width="1" height="1" fill="#fff"/>
<rect x="392" y="54" width="8" height="8" fill="#000080"/>
<rect x="393" y="57" width="6" height="4" fill="#C0DCC0"/>
<rect x="393" y="55" width="1" height="1" fill="#fff"/>
<rect x="392" y="54" width="9" height="7" fill="#000080"/>
<rect x="393" y="57" width="7" height="3" fill="#C0DCC0"/>
<rect x="394" y="58" width="5" height="1" fill="#000"/>
<path d="M398.5 46.5H401.5M398.5 46.5V49.5M398.5 46.5L402 50" stroke="#000" fill="none" stroke-width="1"/>
<rect x="423" y="46" width="1" height="1" fill="#000"/>
<rect x="427" y="46" width="1" height="1" fill="#000"/>
<rect x="423" y="47" width="1" height="1" fill="#000"/>
<rect x="427" y="47" width="1" height="1" fill="#000"/>
<rect x="423" y="48" width="1" height="1" fill="#000"/>
<rect x="427" y="48" width="1" height="1" fill="#000"/>
<rect x="423" y="49" width="1" height="1" fill="#000"/>
<rect x="424" y="49" width="1" height="1" fill="#000"/>
<rect x="426" y="49" width="1" height="1" fill="#000"/>
<rect x="427" y="49" width="1" height="1" fill="#000"/>
<rect x="424" y="50" width="1" height="1" fill="#000"/>
<rect x="425" y="50" width="1" height="1" fill="#000"/>
<rect x="426" y="50" width="1" height="1" fill="#000"/>
<rect x="424" y="51" width="1" height="1" fill="#000"/>
<rect x="425" y="51" width="1" height="1" fill="#000"/>
<rect x="426" y="51" width="1" height="1" fill="#000"/>
<rect x="425" y="52" width="1" height="1" fill="#000"/>
<rect x="424" y="53" width="1" height="1" fill="#000080"/>
<rect x="426" y="53" width="1" height="1" fill="#000080"/>
<rect x="424" y="54" width="1" height="1" fill="#000080"/>
<rect x="426" y="54" width="1" height="1" fill="#000080"/>
<rect x="427" y="54" width="1" height="1" fill="#000080"/>
<rect x="428" y="54" width="1" height="1" fill="#000080"/>
<rect x="422" y="55" width="1" height="1" fill="#000080"/>
<rect x="423" y="55" width="1" height="1" fill="#000080"/>
<rect x="424" y="55" width="1" height="1" fill="#000080"/>
<rect x="426" y="55" width="1" height="1" fill="#000080"/>
<rect x="429" y="55" width="1" height="1" fill="#000080"/>
<rect x="421" y="56" width="1" height="1" fill="#000080"/>
<rect x="424" y="56" width="1" height="1" fill="#000080"/>
<rect x="426" y="56" width="1" height="1" fill="#000080"/>
<rect x="429" y="56" width="1" height="1" fill="#000080"/>
<rect x="421" y="57" width="1" height="1" fill="#000080"/>
<rect x="424" y="57" width="1" height="1" fill="#000080"/>
<rect x="426" y="57" width="1" height="1" fill="#000080"/>
<rect x="429" y="57" width="1" height="1" fill="#000080"/>
<rect x="421" y="58" width="1" height="1" fill="#000080"/>
<rect x="424" y="58" width="1" height="1" fill="#000080"/>
<rect x="427" y="58" width="1" height="1" fill="#000080"/>
<rect x="428" y="58" width="1" height="1" fill="#000080"/>
<rect x="422" y="59" width="1" height="1" fill="#000080"/>
<rect x="423" y="59" width="1" height="1" fill="#000080"/>
<path d="M441 46H447L449 48V54H441Z" fill="#000"/>
<rect x="442" y="47" width="5" height="6" fill="#fff"/>
<rect x="443" y="49" width="3" height="1" fill="#000"/>
<rect x="443" y="51" width="3" height="1" fill="#000"/>
<path d="M447 49H453L456 52V59H447Z" fill="#000080"/>
<rect x="448" y="50" width="5" height="8" fill="#fff"/>
<rect x="448" y="53" width="7" height="5" fill="#fff"/>
<rect x="449" y="52" width="3" height="1" fill="#000"/>
<rect x="449" y="54" width="5" height="1" fill="#000"/>
<rect x="449" y="56" width="5" height="1" fill="#000"/>
<path d="M465 47H468V46H472V47H476L477 48V59L476 60H465L464 59V48Z" fill="#808080"/>
<rect x="468" y="49" width="6" height="1" fill="#fff"/>
<rect x="471" y="53" width="8" height="7" fill="#fff"/>
<rect x="472" y="54" width="6" height="5" fill="#C0DCC0"/>
<rect x="473" y="55" width="2" height="1" fill="#808080"/>
<rect x="473" y="57" width="4" height="1" fill="#808080"/>
<rect x="490" y="47" width="3" height="3" fill="#000"/>
<rect x="496" y="47" width="3" height="3" fill="#000"/>
<rect x="489" y="50" width="5" height="2" fill="#000"/>
<rect x="495" y="50" width="5" height="2" fill="#000"/>
<rect x="488" y="52" width="13" height="3" fill="#000"/>
<rect x="487" y="55" width="6" height="6" fill="#000"/>
<rect x="496" y="55" width="6" height="6" fill="#000"/>
<rect x="491" y="48" width="1" height="1" fill="#fff"/>
<rect x="497" y="48" width="1" height="1" fill="#fff"/>
<rect x="490" y="51" width="1" height="1" fill="#fff"/>
<rect x="496" y="51" width="1" height="1" fill="#fff"/>
<rect x="489" y="53" width="1" height="1" fill="#fff"/>
<rect x="489" y="54" width="1" height="1" fill="#fff"/>
<rect x="494" y="54" width="1" height="1" fill="#fff"/>
<rect x="497" y="53" width="1" height="1" fill="#fff"/>
<rect x="497" y="54" width="1" height="1" fill="#fff"/>
<rect x="488" y="57" width="1" height="1" fill="#fff"/>
<rect x="488" y="58" width="1" height="1" fill="#fff"/>
<rect x="499" y="57" width="1" height="1" fill="#fff"/>
<rect x="499" y="58" width="1" height="1" fill="#fff"/>
<path d="M522 47H529L531 49V51H533V59L532 60H519L518 59V52L519 51H522Z" fill="#000"/>
<rect x="523" y="48" width="6" height="3" fill="#fff"/>
<rect x="519" y="52" width="13" height="7" fill="#fff"/>
<rect x="521" y="53" width="1" height="1" fill="#808080"/>
<rect x="523" y="53" width="1" height="1" fill="#808080"/>
<rect x="525" y="53" width="1" height="1" fill="#808080"/>
<rect x="527" y="53" width="1" height="1" fill="#808080"/>
<rect x="529" y="53" width="1" height="1" fill="#808080"/>
<rect x="520" y="55" width="1" height="1" fill="#808080"/>
<rect x="522" y="55" width="1" height="1" fill="#808080"/>
<rect x="524" y="55" width="1" height="1" fill="#808080"/>
<rect x="526" y="55" width="1" height="1" fill="#808080"/>
<rect x="528" y="55" width="1" height="1" fill="#808080"/>
<rect x="530" y="55" width="1" height="1" fill="#808080"/>
<rect x="521" y="57" width="1" height="1" fill="#808080"/>
<rect x="523" y="57" width="1" height="1" fill="#808080"/>
<rect x="525" y="57" width="1" height="1" fill="#808080"/>
<rect x="527" y="57" width="1" height="1" fill="#808080"/>
<rect x="529" y="57" width="1" height="1" fill="#808080"/>
<path d="M544 46H554V49H556V58L555 60H541L540 58V53L543 49H544Z" fill="#000"/>
<rect x="545" y="47" width="8" height="2" fill="#fff"/>
<rect x="544" y="50" width="9" height="2" fill="#fff"/>
<rect x="541" y="54" width="13" height="2" fill="#D8F0D8"/>
<rect x="541" y="57" width="13" height="1" fill="#fff"/>
<rect x="549" y="55" width="3" height="1" fill="#FFFF00"/>
<rect x="577" y="46" width="1" height="1" fill="#000"/>
<rect x="578" y="46" width="1" height="1" fill="#000"/>
<rect x="579" y="46" width="1" height="1" fill="#000"/>
<rect x="577" y="47" width="1" height="1" fill="#000"/>
<rect x="578" y="47" width="1" height="1" fill="#000"/>
<rect x="579" y="47" width="1" height="1" fill="#000"/>
<rect x="580" y="47" width="1" height="1" fill="#FF0000"/>
<rect x="576" y="48" width="1" height="1" fill="#000"/>
<rect x="577" y="48" width="1" height="1" fill="#FFFF00"/>
<rect x="578" y="48" width="1" height="1" fill="#000"/>
<rect x="579" y="48" width="1" height="1" fill="#000"/>
<rect x="580" y="48" width="1" height="1" fill="#FF0000"/>
<rect x="576" y="49" width="1" height="1" fill="#000"/>
<rect x="577" y="49" width="1" height="1" fill="#FFFF00"/>
<rect x="578" y="49" width="1" height="1" fill="#FFFF00"/>
<rect x="579" y="49" width="1" height="1" fill="#000"/>
<rect x="575" y="50" width="1" height="1" fill="#000"/>
<rect x="576" y="50" width="1" height="1" fill="#FFFF00"/>
<rect x="577" y="50" width="1" height="1" fill="#FFFF00"/>
<rect x="578" y="50" width="1" height="1" fill="#FF0000"/>
<rect x="579" y="50" width="1" height="1" fill="#000"/>
<rect x="575" y="51" width="1" height="1" fill="#000"/>
<rect x="576" y="51" width="1" height="1" fill="#FFFF00"/>
<rect x="577" y="51" width="1" height="1" fill="#FFFF00"/>
<rect x="578" y="51" width="1" height="1" fill="#000"/>
<rect x="574" y="52" width="1" height="1" fill="#000"/>
<rect x="575" y="52" width="1" height="1" fill="#FFFF00"/>
<rect x="576" y="52" width="1" height="1" fill="#FFFF00"/>
<rect x="577" y="52" width="1" height="1" fill="#FF0000"/>
<rect x="578" y="52" width="1" height="1" fill="#000"/>
<rect x="574" y="53" width="1" height="1" fill="#000"/>
<rect x="575" y="53" width="1" height="1" fill="#FFFF00"/>
<rect x="576" y="53" width="1" height="1" fill="#FFFF00"/>
<rect x="577" y="53" width="1" height="1" fill="#000"/>
<rect x="573" y="54" width="1" height="1" fill="#000"/>
<rect x="574" y="54" width="1" height="1" fill="#FFFF00"/>
<rect x="575" y="54" width="1" height="1" fill="#FFFF00"/>
<rect x="576" y="54" width="1" height="1" fill="#FF0000"/>
<rect x="577" y="54" width="1" height="1" fill="#000"/>
<rect x="573" y="55" width="1" height="1" fill="#000"/>
<rect x="574" y="55" width="1" height="1" fill="#FF0000"/>
<rect x="575" y="55" width="1" height="1" fill="#FF0000"/>
<rect x="576" y="55" width="1" height="1" fill="#000"/>
<rect x="573" y="56" width="1" height="1" fill="#000"/>
<rect x="574" y="56" width="1" height="1" fill="#000"/>
<rect x="575" y="56" width="1" height="1" fill="#000"/>
<rect x="573" y="57" width="1" height="1" fill="#000"/>
<rect x="574" y="57" width="1" height="1" fill="#000"/>
<rect x="573" y="58" width="1" height="1" fill="#000"/>
<rect x="573" y="59" width="14" height="1" fill="#0000FF"/>
<rect x="601" y="46" width="1" height="7" fill="#000"/>
<rect x="594" y="53" width="16" height="1" fill="#000"/>
<path d="M594.5 53.5L601.5 60.5L608.5 53.5" stroke="#000" fill="none" stroke-width="1"/>
<path d="M597 54H607L602 59Z" fill="#808000"/>
<rect x="617" y="47" width="15" height="10" fill="#000"/>
<rect x="618" y="48" width="13" height="8" fill="#808000"/>
<rect x="619" y="49" width="11" height="6" fill="#C0DCC0"/>
<rect x="623" y="57" width="1" height="4" fill="#000"/>
<path d="M622.5 54V50.5L624.5 49.5L626.5 50.5V54M622.5 52.5H626.5" stroke="#000" fill="none" stroke-width="1"/>
<path d="M645.5 46.5L647.5 48.5L653.5 50.5L643.5 54.5L647.5 58.5V60.5" stroke="#000" fill="none" stroke-width="1"/>
<rect x="670" y="46" width="1" height="6" fill="#000"/>
<rect x="665" y="52" width="12" height="2" fill="#000"/>
<rect x="665" y="55" width="12" height="2" fill="#000"/>
<rect x="670" y="57" width="1" height="4" fill="#000"/>
<path d="M690.5 46.5H693.5L695.5 48.5V50.5L693.5 52.5H692.5H693.5L695.5 54.5V57.5L693.5 59.5H690.5" stroke="#000" fill="none" stroke-width="1"/>
<rect x="717" y="46" width="1" height="15" fill="#000"/>
<rect x="710" y="49" width="15" height="1" fill="#000"/>
<rect x="710" y="57" width="15" height="1" fill="#000"/>
<path d="M710.5 49.5L717.5 56.5L724.5 49.5" stroke="#000" fill="none" stroke-width="1"/>
<path d="M712.5 50.5L717.5 55.5L722.5 50.5" stroke="#808080" fill="none" stroke-width="1"/>
<rect x="732" y="50" width="3" height="1" fill="#000"/>
<rect x="732" y="56" width="3" height="1" fill="#000"/>
<rect x="745" y="53" width="3" height="1" fill="#000"/>
<path d="M735 48H741L743 49L744 51L745 53L744 55L743 57L741 58H735Z" fill="#000"/>
<path d="M736 49H740L742 50L743 52L743 54L742 56L740 57H736Z" fill="#808080"/>
<path d="M737 50H740L741 51L742 53L741 55L740 56H737Z" fill="#C0DCC0"/>
<path d="M759 47H762L764 51L766 47H769L770 49L769 53L770 55L769 58L766 61H761L756 56L755 54L757 53L759 55L758 50Z" fill="#000"/>
<path d="M760 48H761L763 53L765 52L767 48H768L768 53H767L768 55L766 59H762L757 55H758L760 56L759 50Z" fill="#fff"/>
<path d="M782 49H789L791 51V55L789 59V61H782V58L779 55V52L780 51H782Z" fill="#000"/>
<path d="M783 50H788L790 52V55L788 58V60H783V57L780 55V53H782Z" fill="#fff"/>
<rect x="784" y="51" width="1" height="3" fill="#000"/>
<rect x="786" y="51" width="1" height="3" fill="#000"/>
<path d="M804.5 54.5Q802.5 47.5 809.5 47.5Q815.5 48.5 815.5 53.5Q815.5 59.5 808.5 59.5" stroke="#000" fill="none" stroke-width="1"/>
<rect x="808" y="47" width="5" height="1" fill="#808000"/>
<path d="M802.5 51.5V55.5H806.5" stroke="#000" fill="none" stroke-width="1"/>
<path d="M837.5 50.5Q835.5 47.5 831.5 47.5Q826.5 48.5 825.5 53.5Q826.5 58.5 831.5 59.5Q834.5 59.5 835.5 57.5" stroke="#808080" fill="none" stroke-width="1.2"/>
<path d="M838.5 49.5V54.5H834.5" stroke="#808080" fill="none" stroke-width="1"/>
<path d="M826.5 55.5Q828.5 60.5 832.5 60.5" stroke="#fff" fill="none" stroke-width="1"/>
<rect x="847" y="52" width="2" height="9" fill="#808080"/>
<rect x="849" y="52" width="3" height="1" fill="#808080"/>
<rect x="849" y="56" width="2" height="1" fill="#808080"/>
<rect x="849" y="59" width="3" height="2" fill="#808080"/>
<rect x="854" y="54" width="9" height="2" fill="#808080"/>
<rect x="854" y="56" width="1" height="3" fill="#808080"/>
<rect x="858" y="56" width="1" height="2" fill="#808080"/>
<rect x="862" y="56" width="1" height="3" fill="#808080"/>
<path d="M849.5 49.5L851.5 46.5H857.5L860.5 49.5" stroke="#808080" fill="none" stroke-width="1"/>
<rect x="858" y="49" width="3" height="1" fill="#808080"/>
<rect x="860" y="47" width="1" height="2" fill="#808080"/>
<rect x="849" y="61" width="4" height="1" fill="#fff"/>
<rect x="855" y="59" width="1" height="1" fill="#fff"/>
<rect x="863" y="59" width="1" height="1" fill="#fff"/>
<rect x="850" y="50" width="1" height="1" fill="#fff"/>
<rect x="870" y="52" width="2" height="9" fill="#808080"/>
<rect x="872" y="52" width="3" height="1" fill="#808080"/>
<rect x="872" y="56" width="2" height="1" fill="#808080"/>
<rect x="872" y="59" width="3" height="2" fill="#808080"/>
<rect x="884" y="52" width="2" height="9" fill="#808080"/>
<rect x="881" y="52" width="3" height="1" fill="#808080"/>
<rect x="882" y="56" width="2" height="1" fill="#808080"/>
<rect x="881" y="59" width="3" height="2" fill="#808080"/>
<path d="M872.5 49.5L874.5 46.5H880.5L883.5 49.5" stroke="#808080" fill="none" stroke-width="1"/>
<rect x="881" y="49" width="3" height="1" fill="#808080"/>
<rect x="883" y="47" width="1" height="2" fill="#808080"/>
<rect x="871" y="61" width="4" height="1" fill="#fff"/>
<rect x="882" y="61" width="5" height="1" fill="#fff"/>
<rect x="873" y="50" width="1" height="1" fill="#fff"/>
</svg>
<div class="t" style="left:893px;top:48px;font-family:'Liberation Serif',serif;font-weight:bold;font-style:italic;font-size:14px;letter-spacing:-0.5px">Aa</div>
<div class="t" style="left:916px;top:47px;font-size:12px;letter-spacing:-0.3px">.op</div>
<div class="a" style="left:62px;top:45px;width:1px;height:19px;background:#808080"></div><div class="a" style="left:63px;top:45px;width:1px;height:19px;background:#fff"></div><div class="a" style="left:93px;top:45px;width:1px;height:19px;background:#808080"></div><div class="a" style="left:94px;top:45px;width:1px;height:19px;background:#fff"></div><div class="a" style="left:124px;top:45px;width:1px;height:19px;background:#808080"></div><div class="a" style="left:125px;top:45px;width:1px;height:19px;background:#fff"></div><div class="a" style="left:178px;top:45px;width:1px;height:19px;background:#808080"></div><div class="a" style="left:179px;top:45px;width:1px;height:19px;background:#fff"></div><div class="a" style="left:278px;top:45px;width:1px;height:19px;background:#808080"></div><div class="a" style="left:279px;top:45px;width:1px;height:19px;background:#fff"></div><div class="a" style="left:332px;top:45px;width:1px;height:19px;background:#808080"></div><div class="a" style="left:333px;top:45px;width:1px;height:19px;background:#fff"></div><div class="a" style="left:409px;top:45px;width:1px;height:19px;background:#808080"></div><div class="a" style="left:410px;top:45px;width:1px;height:19px;background:#fff"></div><div class="a" style="left:509px;top:45px;width:1px;height:19px;background:#808080"></div><div class="a" style="left:510px;top:45px;width:1px;height:19px;background:#fff"></div><div class="a" style="left:563px;top:45px;width:1px;height:19px;background:#808080"></div><div class="a" style="left:564px;top:45px;width:1px;height:19px;background:#fff"></div>
<div class="a" style="left:942px;top:40px;width:1px;height:28px;background:#808080"></div>
<div class="a" style="left:943px;top:40px;width:1px;height:28px;background:#fff"></div>

<!-- MDI outer sunken border -->
<div class="a" style="left:0;top:68px;width:1280px;height:1px;background:#808080"></div>
<div class="a" style="left:0;top:68px;width:1px;height:910px;background:#808080"></div>
<div class="a" style="left:1px;top:69px;width:1279px;height:1px;background:#404040"></div>
<div class="a" style="left:1px;top:69px;width:1px;height:908px;background:#404040"></div>
<div class="a" style="left:1278px;top:69px;width:1px;height:908px;background:#D0E8D0"></div>
<div class="a" style="left:1279px;top:68px;width:1px;height:910px;background:#fff"></div>
<div class="a" style="left:1px;top:976px;width:1278px;height:1px;background:#D0E8D0"></div>
<div class="a" style="left:0;top:977px;width:1280px;height:1px;background:#fff"></div>

<!-- status bar -->
<div class="a" style="left:1229px;top:980px;width:51px;height:16px;border-top:1px solid #808080;border-left:1px solid #808080;border-bottom:1px solid #fff"></div>
<div class="a" style="left:0;top:997px;width:1280px;height:1px;background:#fff"></div>


<!-- tabs -->
<div class="a" style="left:2px;top:91px;width:1276px;height:1px;background:#fff"></div>
<div class="a" style="left:2px;top:70px;width:87px;height:23px;background:#C0DCC0;border-top:1px solid #fff;border-left:1px solid #fff;border-right:1px solid #404040;box-shadow:inset -1px 0 0 #808080"></div>
<div class="a" style="left:89px;top:72px;width:81px;height:19px;background:#C0DCC0;border-top:1px solid #fff;border-left:1px solid #fff;border-right:1px solid #404040;box-shadow:inset -1px 0 0 #808080"></div>
<div class="t" style="left:33px;top:75px;font-size:12px;letter-spacing:-0.6px">Draft7.asc</div>
<div class="t" style="left:116px;top:77px;font-size:12px;letter-spacing:-0.7px">Draft7.raw</div>
<!-- tabs area -->
<div class="a" style="left:2px;top:93px;width:1276px;height:1px;background:#808080"></div>
<div class="a" style="left:2px;top:94px;width:1276px;height:1px;background:#404040"></div>


<!-- plot window -->
<div class="a" style="left:2px;top:95px;width:1276px;height:1px;background:#D0E8D0"></div>
<div class="a fr" style="left:2px;top:97px;width:1276px;height:439px"></div>
<div class="a" style="left:3px;top:97px;width:1273px;height:1px;background:#C0DCC0"></div>
<div class="a ctb" style="left:6px;top:101px;width:1268px;height:18px;background:#C0C0C0">
<span style="left:0;width:314px;background:#808080"></span>
<span style="left:314px;width:599px;background:#A0A0A4"></span>
</div>
<div class="t ttl" style="left:25px;top:105px;color:#C0DCC0;letter-spacing:0.8px">Draft7.raw</div>
<div class="a rb" style="left:1222px;top:103px;width:16px;height:14px"></div>
<div class="a rb" style="left:1238px;top:103px;width:16px;height:14px"></div>
<div class="a rb" style="left:1256px;top:103px;width:16px;height:14px"></div>
<div class="a sk" style="left:6px;top:120px;width:1268px;height:412px;background:#000"></div>
<svg class="a" style="left:0;top:0" width="1280" height="1000" shape-rendering="crispEdges">
<g stroke="#8080A0" stroke-width="1" stroke-dasharray="3 3" fill="none">
<path d="M68 170.5H1258"/>
<path d="M68 201.5H1258"/>
<path d="M68 231.5H1258"/>
<path d="M68 261.5H1258"/>
<path d="M68 292.5H1258"/>
<path d="M68 322.5H1258"/>
<path d="M68 352.5H1258"/>
<path d="M68 383.5H1258"/>
<path d="M68 413.5H1258"/>
<path d="M68 443.5H1258"/>
<path d="M68 474.5H1258"/>
<path d="M187.5 505V140"/>
<path d="M306.5 505V140"/>
<path d="M425.5 505V140"/>
<path d="M544.5 505V140"/>
<path d="M663.5 505V140"/>
<path d="M782.5 505V140"/>
<path d="M901.5 505V140"/>
<path d="M1020.5 505V140"/>
<path d="M1139.5 505V140"/>
</g>
<g stroke="#A0A0A4" stroke-width="1" fill="none">
<path d="M68.5 140.5H1258.5V504.5H68.5Z"/>
<path d="M61 140.5H68"/>
<path d="M61 170.5H68"/>
<path d="M61 201.5H68"/>
<path d="M61 231.5H68"/>
<path d="M61 261.5H68"/>
<path d="M61 292.5H68"/>
<path d="M61 322.5H68"/>
<path d="M61 352.5H68"/>
<path d="M61 383.5H68"/>
<path d="M61 413.5H68"/>
<path d="M61 443.5H68"/>
<path d="M61 474.5H68"/>
<path d="M61 504.5H68"/>
<path d="M68.5 504V512"/>
<path d="M187.5 504V512"/>
<path d="M306.5 504V512"/>
<path d="M425.5 504V512"/>
<path d="M544.5 504V512"/>
<path d="M663.5 504V512"/>
<path d="M782.5 504V512"/>
<path d="M901.5 504V512"/>
<path d="M1020.5 504V512"/>
<path d="M1139.5 504V512"/>
<path d="M1258.5 504V512"/>
</g>
<path d="M68 332.5H1258" stroke="#00FF00" stroke-width="1"/>
</svg>
<div class="ylab" style="top:133px">3.2202V</div>
<div class="ylab" style="top:163px">3.2196V</div>
<div class="ylab" style="top:194px">3.2190V</div>
<div class="ylab" style="top:224px">3.2184V</div>
<div class="ylab" style="top:254px">3.2178V</div>
<div class="ylab" style="top:285px">3.2172V</div>
<div class="ylab" style="top:315px">3.2166V</div>
<div class="ylab" style="top:345px">3.2160V</div>
<div class="ylab" style="top:376px">3.2154V</div>
<div class="ylab" style="top:406px">3.2148V</div>
<div class="ylab" style="top:436px">3.2142V</div>
<div class="ylab" style="top:467px">3.2136V</div>
<div class="ylab" style="top:497px">3.2130V</div>
<div class="xlab" style="left:38px">0.0s</div>
<div class="xlab" style="left:157px">0.1s</div>
<div class="xlab" style="left:276px">0.2s</div>
<div class="xlab" style="left:395px">0.3s</div>
<div class="xlab" style="left:514px">0.4s</div>
<div class="xlab" style="left:633px">0.5s</div>
<div class="xlab" style="left:752px">0.6s</div>
<div class="xlab" style="left:871px">0.7s</div>
<div class="xlab" style="left:990px">0.8s</div>
<div class="xlab" style="left:1109px">0.9s</div>
<div class="xlab" style="left:1228px">1.0s</div>
<div class="t" style="left:639px;top:123px;font-size:13px;color:#00FF00;font-weight:bold;letter-spacing:0.3px">V(n002)</div>

<!-- schematic window -->
<div class="a fr" style="left:2px;top:536px;width:1276px;height:439px"></div>
<div class="a ctb" style="left:6px;top:540px;width:1268px;height:18px;background:#A6CAF0">
<span style="left:0;width:64px;background:#002080"></span>
<span style="left:64px;width:41px;background:#202080"></span>
<span style="left:105px;width:206px;background:#204080"></span>
<span style="left:311px;width:23px;background:#404080"></span>
<span style="left:334px;width:168px;background:#406080"></span>
<span style="left:502px;width:51px;background:#4060C0"></span>
<span style="left:553px;width:14px;background:#6060C0"></span>
<span style="left:567px;width:230px;background:#6080C0"></span>
<span style="left:797px;width:3px;background:#60A0C0"></span>
<span style="left:800px;width:225px;background:#80A0C0"></span>
<span style="left:1025px;width:19px;background:#80C0C0"></span>
<span style="left:1044px;width:28px;background:#A0C0C0"></span>
</div>
<div class="t ttl" style="left:25px;top:544px;letter-spacing:0.6px">Draft7.asc</div>
<div class="a rb" style="left:1222px;top:542px;width:16px;height:14px"></div>
<div class="a rb" style="left:1238px;top:542px;width:16px;height:14px"></div>
<div class="a rb" style="left:1256px;top:542px;width:16px;height:14px"></div>
<div class="a sk" style="left:6px;top:559px;width:1268px;height:412px;background:#fff"></div>

<!-- schematic -->
<svg class="a" style="left:0;top:0" width="1280" height="1000" shape-rendering="crispEdges" fill="none" stroke-width="1">
<g stroke="#0000FF">
<path d="M450.5 631.5H527M581 631.5H678.5V708M678.5 750V783.5H450.5V750M450.5 698V631.5"/>
<path d="M592.5 787V794.5M579 794.5H605M579.5 794.5L592.5 807.5L604.5 794.5"/>
<rect x="589" y="780" width="7" height="7" fill="#0000FF" stroke="none"/>
</g>
<g stroke="#000080">
<path d="M527 631.5H532.5L537.5 621.5L548.5 642.5L559.5 621.5L570.5 642.5L575.5 631.5H581"/>
<path d="M450.5 698V702M450.5 745V750"/>
<circle cx="450.5" cy="723.5" r="21"/>
<path d="M445 710.5H457M450.5 705V717M445 737.5H457"/>
<path d="M678.5 708V721.5M678.5 737V750"/>
<path d="M665.5 724.5L668.5 721.5H689.5L692.5 718.5"/>
<path d="M668.5 737.5H689.5M668.5 737.5L678.5 721.5L689.5 737.5"/>
</g>
</svg>
<div class="sch" style="left:543px;top:604px">R1</div>
<div class="sch" style="left:539px;top:644px;letter-spacing:0.3px">1K5</div>
<div class="sch" style="left:467px;top:690px">V1</div>
<div class="sch" style="left:467px;top:749px;letter-spacing:0.3px">10</div>
<div class="sch" style="left:652px;top:695px;letter-spacing:0.3px">D2</div>
<div class="sch" style="left:607px;top:744px;letter-spacing:0.3px">1N75033</div>
<div class="sch" style="left:471px;top:810px;letter-spacing:0.2px">.tran 1</div>
<div id="model" class="a" style="left:0;top:0;width:1272px;height:1000px;overflow:hidden"><div class="sch mw" style="left:11.00px;top:863px;letter-spacing:0.4px">.model</div><div class="sch mw" style="left:65.50px;top:863px;letter-spacing:0.08px">1N75033</div><div class="sch mw" style="left:136.00px;top:863px;letter-spacing:0.06px">D(Is=.88f</div><div class="sch mw" style="left:206.50px;top:863px;letter-spacing:-0.1px">Rs=.25</div><div class="sch mw" style="left:263.00px;top:863px;letter-spacing:0.07px">Cjo=175p</div><div class="sch mw" style="left:337.75px;top:863px;letter-spacing:-0.4px">M=.55</div><div class="sch mw" style="left:386.00px;top:863px;letter-spacing:0.3px">nbv=1.7</div><div class="sch mw" style="left:450.25px;top:863px;letter-spacing:0.1px">bv=3.3</div><div class="sch mw" style="left:504.20px;top:863px;letter-spacing:-0.25px">Vj=.75</div><div class="sch mw" style="left:554.00px;top:863px;letter-spacing:0.1px">Isr=1.86n</div><div class="sch mw" style="left:627.00px;top:863px;letter-spacing:0px">Nr=2</div><div class="sch mw" style="left:667.00px;top:863px;letter-spacing:0px">Ibv=20.245m</div><div class="sch mw" style="left:766.50px;top:863px;letter-spacing:0.05px">Ibvl=1.96m</div><div class="sch mw" style="left:851.00px;top:863px;letter-spacing:0.3px">Nbvl=15</div><div class="sch mw" style="left:918.00px;top:863px;letter-spacing:0.12px">Tbv1=-21.3u</div><div class="sch mw" style="left:1014.50px;top:863px;letter-spacing:0.04px">Vpk=4.7</div><div class="sch mw" style="left:1079.00px;top:863px;letter-spacing:0.5px">mfg=Motorola</div><div class="sch mw" style="left:1188.00px;top:863px;letter-spacing:0.5px">type=zener</div></div>
<!-- hscroll -->
<div class="a" style="left:8px;top:953px;width:1264px;height:16px;background-color:#C0DCC0;background-image:repeating-conic-gradient(#fff 0 25%,#C0DCC0 0 50%);background-size:2px 2px"></div>
<div class="a rb" style="left:8px;top:953px;width:16px;height:16px"></div>
<div class="a rb" style="left:51px;top:953px;width:1064px;height:16px"></div>
<div class="a rb" style="left:1256px;top:953px;width:16px;height:16px"></div>
<svg class="a" style="left:0;top:0" width="1280" height="1000" shape-rendering="crispEdges"><rect x="1232" y="11" width="6" height="2" fill="#000"/><path d="M1249 4h6v6h-6z M1250 6v3h4v-3z" fill="#000" fill-rule="evenodd"/><path d="M1247 7h6v6h-6z M1248 9v3h4v-3z" fill="#000" fill-rule="evenodd"/><rect x="1248" y="9" width="4" height="3" fill="#C0DCC0"/><rect x="1266" y="5" width="1" height="1" fill="#000"/><rect x="1267" y="5" width="1" height="1" fill="#000"/><rect x="1272" y="5" width="1" height="1" fill="#000"/><rect x="1273" y="5" width="1" height="1" fill="#000"/><rect x="1267" y="6" width="1" height="1" fill="#000"/><rect x="1268" y="6" width="1" height="1" fill="#000"/><rect x="1271" y="6" width="1" height="1" fill="#000"/><rect x="1272" y="6" width="1" height="1" fill="#000"/><rect x="1268" y="7" width="1" height="1" fill="#000"/><rect x="1269" y="7" width="1" height="1" fill="#000"/><rect x="1270" y="7" width="1" height="1" fill="#000"/><rect x="1271" y="7" width="1" height="1" fill="#000"/><rect x="1269" y="8" width="1" height="1" fill="#000"/><rect x="1270" y="8" width="1" height="1" fill="#000"/><rect x="1268" y="9" width="1" height="1" fill="#000"/><rect x="1269" y="9" width="1" height="1" fill="#000"/><rect x="1270" y="9" width="1" height="1" fill="#000"/><rect x="1271" y="9" width="1" height="1" fill="#000"/><rect x="1267" y="10" width="1" height="1" fill="#000"/><rect x="1268" y="10" width="1" height="1" fill="#000"/><rect x="1271" y="10" width="1" height="1" fill="#000"/><rect x="1272" y="10" width="1" height="1" fill="#000"/><rect x="1266" y="11" width="1" height="1" fill="#000"/><rect x="1267" y="11" width="1" height="1" fill="#000"/><rect x="1272" y="11" width="1" height="1" fill="#000"/><rect x="1273" y="11" width="1" height="1" fill="#000"/><rect x="1226" y="112" width="6" height="2" fill="#000"/><path d="M1241 105h9v9h-9z M1242 107v6h7v-6z" fill="#000" fill-rule="evenodd"/><rect x="1260" y="106" width="1" height="1" fill="#000"/><rect x="1261" y="106" width="1" height="1" fill="#000"/><rect x="1266" y="106" width="1" height="1" fill="#000"/><rect x="1267" y="106" width="1" height="1" fill="#000"/><rect x="1261" y="107" width="1" height="1" fill="#000"/><rect x="1262" y="107" width="1" height="1" fill="#000"/><rect x="1265" y="107" width="1" height="1" fill="#000"/><rect x="1266" y="107" width="1" height="1" fill="#000"/><rect x="1262" y="108" width="1" height="1" fill="#000"/><rect x="1263" y="108" width="1" height="1" fill="#000"/><rect x="1264" y="108" width="1" height="1" fill="#000"/><rect x="1265" y="108" width="1" height="1" fill="#000"/><rect x="1263" y="109" width="1" height="1" fill="#000"/><rect x="1264" y="109" width="1" height="1" fill="#000"/><rect x="1262" y="110" width="1" height="1" fill="#000"/><rect x="1263" y="110" width="1" height="1" fill="#000"/><rect x="1264" y="110" width="1" height="1" fill="#000"/><rect x="1265" y="110" width="1" height="1" fill="#000"/><rect x="1261" y="111" width="1" height="1" fill="#000"/><rect x="1262" y="111" width="1" height="1" fill="#000"/><rect x="1265" y="111" width="1" height="1" fill="#000"/><rect x="1266" y="111" width="1" height="1" fill="#000"/><rect x="1260" y="112" width="1" height="1" fill="#000"/><rect x="1261" y="112" width="1" height="1" fill="#000"/><rect x="1266" y="112" width="1" height="1" fill="#000"/><rect x="1267" y="112" width="1" height="1" fill="#000"/><rect x="1226" y="551" width="6" height="2" fill="#000"/><path d="M1241 544h9v9h-9z M1242 546v6h7v-6z" fill="#000" fill-rule="evenodd"/><rect x="1260" y="545" width="1" height="1" fill="#000"/><rect x="1261" y="545" width="1" height="1" fill="#000"/><rect x="1266" y="545" width="1" height="1" fill="#000"/><rect x="1267" y="545" width="1" height="1" fill="#000"/><rect x="1261" y="546" width="1" height="1" fill="#000"/><rect x="1262" y="546" width="1" height="1" fill="#000"/><rect x="1265" y="546" width="1" height="1" fill="#000"/><rect x="1266" y="546" width="1" height="1" fill="#000"/><rect x="1262" y="547" width="1" height="1" fill="#000"/><rect x="1263" y="547" width="1" height="1" fill="#000"/><rect x="1264" y="547" width="1" height="1" fill="#000"/><rect x="1265" y="547" width="1" height="1" fill="#000"/><rect x="1263" y="548" width="1" height="1" fill="#000"/><rect x="1264" y="548" width="1" height="1" fill="#000"/><rect x="1262" y="549" width="1" height="1" fill="#000"/><rect x="1263" y="549" width="1" height="1" fill="#000"/><rect x="1264" y="549" width="1" height="1" fill="#000"/><rect x="1265" y="549" width="1" height="1" fill="#000"/><rect x="1261" y="550" width="1" height="1" fill="#000"/><rect x="1262" y="550" width="1" height="1" fill="#000"/><rect x="1265" y="550" width="1" height="1" fill="#000"/><rect x="1266" y="550" width="1" height="1" fill="#000"/><rect x="1260" y="551" width="1" height="1" fill="#000"/><rect x="1261" y="551" width="1" height="1" fill="#000"/><rect x="1266" y="551" width="1" height="1" fill="#000"/><rect x="1267" y="551" width="1" height="1" fill="#000"/><rect x="2" y="1" width="16" height="16" fill="#C0C0C0"/><path d="M8 4H10L7 11L9 14H2V13L4 11Z" fill="#800000"/><path d="M11 4H18V5L16 6L11 14H10V13L13 7L11 5Z" fill="#800000"/><g fill="#0000FF"><rect x="12" y="79" width="3" height="1"/><rect x="15" y="75" width="2" height="9"/><rect x="17" y="76" width="1" height="1"/><rect x="18" y="75" width="1" height="1"/><rect x="19" y="74" width="1" height="1"/><rect x="20" y="73" width="1" height="1"/><rect x="21" y="72" width="1" height="1"/><rect x="17" y="82" width="1" height="1"/><rect x="18" y="83" width="1" height="1"/><rect x="19" y="84" width="2" height="2"/><rect x="20" y="83" width="1" height="3"/><rect x="18" y="85" width="3" height="1"/><rect x="21" y="86" width="1" height="1"/><rect x="22" y="87" width="1" height="1"/></g><g fill="#0000FF" transform="translate(-2,469)"><rect x="12" y="79" width="3" height="1"/><rect x="15" y="75" width="2" height="9"/><rect x="17" y="76" width="1" height="1"/><rect x="18" y="75" width="1" height="1"/><rect x="19" y="74" width="1" height="1"/><rect x="20" y="73" width="1" height="1"/><rect x="21" y="72" width="1" height="1"/><rect x="17" y="82" width="1" height="1"/><rect x="18" y="83" width="1" height="1"/><rect x="19" y="84" width="2" height="2"/><rect x="20" y="83" width="1" height="3"/><rect x="18" y="85" width="3" height="1"/><rect x="21" y="86" width="1" height="1"/><rect x="22" y="87" width="1" height="1"/></g><rect x="96" y="74" width="13" height="13" fill="#C0C0C0"/><rect x="95" y="74" width="1" height="16" fill="#000"/><rect x="95" y="87" width="14" height="1" fill="#000"/><rect x="93" y="74" width="2" height="1" fill="#000"/><rect x="93" y="76" width="2" height="1" fill="#000"/><rect x="93" y="78" width="2" height="1" fill="#000"/><rect x="93" y="80" width="2" height="1" fill="#000"/><rect x="93" y="82" width="2" height="1" fill="#000"/><rect x="93" y="84" width="2" height="1" fill="#000"/><rect x="93" y="86" width="2" height="1" fill="#000"/><rect x="97" y="88" width="1" height="2" fill="#000"/><rect x="99" y="88" width="1" height="2" fill="#000"/><rect x="101" y="88" width="1" height="2" fill="#000"/><rect x="103" y="88" width="1" height="2" fill="#000"/><rect x="105" y="88" width="1" height="2" fill="#000"/><rect x="107" y="88" width="1" height="2" fill="#000"/><path d="M96 82.5L99 79.5H101L103 81.5H105L109 77" stroke="#FF0000" stroke-width="1.6" fill="none"/><rect x="11" y="102" width="13" height="13" fill="#C0C0C0"/><rect x="10" y="102" width="1" height="16" fill="#000"/><rect x="10" y="115" width="14" height="1" fill="#000"/><rect x="8" y="102" width="2" height="1" fill="#000"/><rect x="8" y="104" width="2" height="1" fill="#000"/><rect x="8" y="106" width="2" height="1" fill="#000"/><rect x="8" y="108" width="2" height="1" fill="#000"/><rect x="8" y="110" width="2" height="1" fill="#000"/><rect x="8" y="112" width="2" height="1" fill="#000"/><rect x="8" y="114" width="2" height="1" fill="#000"/><rect x="12" y="116" width="1" height="2" fill="#000"/><rect x="14" y="116" width="1" height="2" fill="#000"/><rect x="16" y="116" width="1" height="2" fill="#000"/><rect x="18" y="116" width="1" height="2" fill="#000"/><rect x="20" y="116" width="1" height="2" fill="#000"/><rect x="22" y="116" width="1" height="2" fill="#000"/><path d="M11 110.5L14 107.5H16L18 109.5H20L24 105" stroke="#FF0000" stroke-width="1.6" fill="none"/><rect x="13" y="960" width="1" height="1" fill="#000"/><rect x="14" y="959" width="1" height="3" fill="#000"/><rect x="15" y="958" width="1" height="5" fill="#000"/><rect x="16" y="957" width="1" height="7" fill="#000"/><rect x="1265" y="960" width="1" height="1" fill="#000"/><rect x="1264" y="959" width="1" height="3" fill="#000"/><rect x="1263" y="958" width="1" height="5" fill="#000"/><rect x="1262" y="957" width="1" height="7" fill="#000"/></svg>
</body></html>
